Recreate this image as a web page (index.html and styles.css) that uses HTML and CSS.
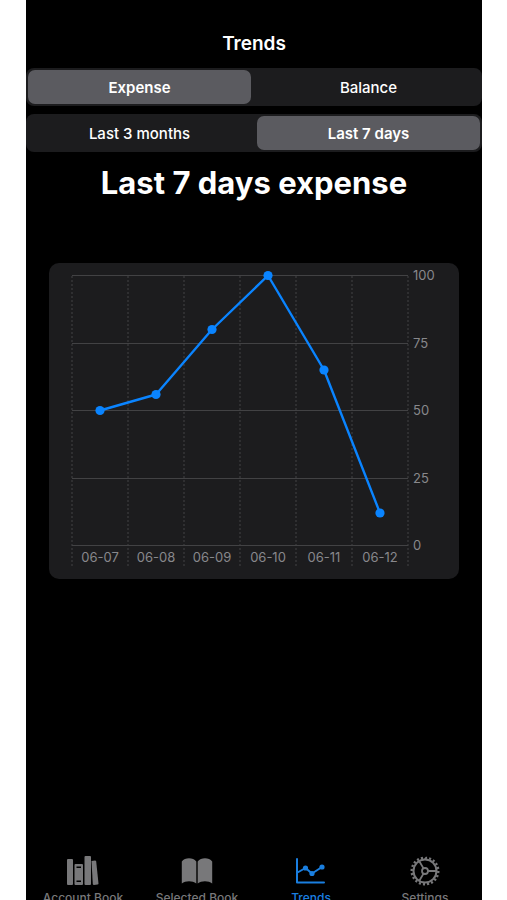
FILE: index.html
```html
<!DOCTYPE html>
<html lang="en">
<head>
    <meta charset="UTF-8">
    <meta name="viewport" content="width=device-width, initial-scale=1">
    <title>Trends</title>
    <link rel="stylesheet" href="styles.css">
</head>
<body>
<div class="screen">
    <header class="nav-bar">Trends</header>

    <main class="content">
        <div class="segments" role="radiogroup" aria-label="Type">
            <input type="radio" name="type" id="type-expense" checked>
            <label for="type-expense">Expense</label>
            <input type="radio" name="type" id="type-balance">
            <label for="type-balance">Balance</label>
        </div>
        <div class="segments" role="radiogroup" aria-label="Period">
            <input type="radio" name="period" id="period-months">
            <label for="period-months">Last 3 months</label>
            <input type="radio" name="period" id="period-days" checked>
            <label for="period-days">Last 7 days</label>
        </div>

        <h1 class="title">Last 7 days expense</h1>

        <div class="card">
            <svg class="chart" viewBox="0 0 410 316">
                <!-- value grid -->
                <path class="grid" d="M23 12.5H359M23 80.5H359M23 147.5H359M23 215.5H359M23 282.5H359"/>
                <!-- day separators -->
                <path class="days" d="M23 13V304M79 13V304M135 13V304M191 13V304M247 13V304M303 13V304M359 13V304"/>
                <g class="values">
                    <text x="364" y="17">100</text>
                    <text x="364" y="85">75</text>
                    <text x="364" y="152">50</text>
                    <text x="364" y="220">25</text>
                    <text x="364" y="287">0</text>
                </g>
                <g class="dates">
                    <text x="51" y="299">06-07</text>
                    <text x="107" y="299">06-08</text>
                    <text x="163" y="299">06-09</text>
                    <text x="219" y="299">06-10</text>
                    <text x="275" y="299">06-11</text>
                    <text x="331" y="299">06-12</text>
                </g>
                <polyline class="line" points="51,147.5 107,131.5 163,66.5 219,12.5 275,107 331,250"/>
                <g class="dots">
                    <circle cx="51" cy="147.5" r="4.6"/>
                    <circle cx="107" cy="131.5" r="4.6"/>
                    <circle cx="163" cy="66.5" r="4.6"/>
                    <circle cx="219" cy="12.5" r="4.6"/>
                    <circle cx="275" cy="107" r="4.6"/>
                    <circle cx="331" cy="250" r="4.6"/>
                </g>
            </svg>
        </div>
    </main>

    <nav class="tab-bar">
        <a href="#accounts">
            <svg viewBox="0 0 32 32" fill="currentColor">
                <rect x="0" y="4" width="6" height="26" rx="1"/>
                <path fill-rule="evenodd" d="M8.500 9h6.500q1 0 1 1v19q0 1-1 1h-6.500q-1 0-1-1v-19q0-1 1-1zM9.500 11.500v1.500h4.500v-1.500zM9.500 25.500v1.500h4.500v-1.500z"/>
                <rect x="17.500" y="1" width="6.500" height="29" rx="1"/>
                <path d="M24.500 6l3.500-.6q1 0 1.200 1l2.300 22q0 1-1 1.200l-3.500.4q-1 0-1.200-1z"/>
            </svg>
            <span>Account Book</span>
        </a>
        <a href="#book">
            <svg viewBox="0 0 32 32" fill="currentColor">
                <path d="M15.300 6.500C12 2.200 4 2.200 .8 6.500V28.500C4.500 25.500 11.500 25.500 15.300 28.500z"/>
                <path d="M16.700 6.500C20 2.200 28 2.200 31.200 6.500V28.500C27.500 25.500 20.500 25.500 16.700 28.500z"/>
            </svg>
            <span>Selected Book</span>
        </a>
        <a class="active" href="#trends" aria-current="page">
            <svg viewBox="0 0 32 32" fill="none" stroke="currentColor" stroke-width="2" stroke-linecap="round" stroke-linejoin="round">
                <path d="M2 4V27.500H29"/>
                <path d="M2.500 17.500L10.500 13L17 18.500L27 12"/>
                <g fill="currentColor" stroke="none">
                    <circle cx="10.500" cy="13" r="2.600"/>
                    <circle cx="17" cy="18.500" r="2.600"/>
                    <circle cx="27" cy="12" r="2.600"/>
                </g>
            </svg>
            <span>Trends</span>
        </a>
        <a href="#settings">
            <svg viewBox="0 0 32 32" fill="none" stroke="currentColor">
                <circle cx="16" cy="16" r="11.500" stroke-width="2"/>
                <!-- teeth -->
                <circle cx="16" cy="16" r="13.300" stroke-width="2.400" pathLength="40" stroke-dasharray="1 1"/>
                <circle cx="16" cy="16" r="3" stroke-width="1.800"/>
                <path stroke-width="1.800" d="M19 16H27M14.500 13.400L10.300 6.200M14.500 18.600L10.300 25.800"/>
            </svg>
            <span>Settings</span>
        </a>
    </nav>
</div>
</body>
</html>
```

FILE: styles.css
```css
* {
    box-sizing: border-box;
    margin: 0;
    padding: 0;
}

body {
    background: #fff;
    color: #fff;
    font-family: Inter, "Liberation Sans", sans-serif;
}

.screen {
    display: flex;
    flex-direction: column;
    height: 100vh;
    margin: 0 25px 0 26px;
    overflow: hidden;
    background: #000;
}

.nav-bar {
    padding: 32px 0 12px;
    font-size: 19px;
    line-height: 24px;
    font-weight: 600;
    text-align: center;
}

.content {
    flex: 1;
}

/* segmented control */
.segments {
    display: flex;
    gap: 6px;
    height: 38px;
    margin-bottom: 8px;
    padding: 2px;
    border-radius: 8px;
    background: #1c1c1e;
}

.segments input {
    appearance: none;
    position: absolute;
}

.segments label {
    flex: 1;
    padding-top: 1px;
    border-radius: 7px;
    font-size: 15px;
    line-height: 33px;
    font-weight: 500;
    text-align: center;
}

.segments input:checked + label {
    background: #5b5b60;
    font-weight: 600;
}

.title {
    margin: 11px 0 60px;
    font-size: 31px;
    line-height: 40px;
    font-weight: 700;
    text-align: center;
}

.card {
    margin: 0 23px;
    border-radius: 10px;
    background: #1c1c1e;
}

/* chart */
.chart {
    display: block;
    width: 100%;
}

.grid {
    stroke: #424244;
    stroke-width: 1;
}

.days {
    stroke: #424244;
    stroke-width: 1;
    stroke-dasharray: 2 2;
}

.values,
.dates {
    fill: #88888c;
    font-size: 13px;
}

.dates {
    text-anchor: middle;
}

.line {
    fill: none;
    stroke: #0a84ff;
    stroke-width: 2.4;
    stroke-linejoin: round;
}

.dots {
    fill: #0a84ff;
}

.tab-bar {
    display: flex;
    height: 45px;
}

.tab-bar a {
    flex: 1;
    display: flex;
    flex-direction: column;
    align-items: center;
    gap: 3px;
    color: #78787a;
    font-size: 12px;
    line-height: 16px;
    font-weight: 500;
    text-decoration: none;
    white-space: nowrap;
}

.tab-bar svg {
    flex: none;
    width: 32px;
    height: 32px;
}

.tab-bar .active {
    color: #1a7fe0;
}
```
